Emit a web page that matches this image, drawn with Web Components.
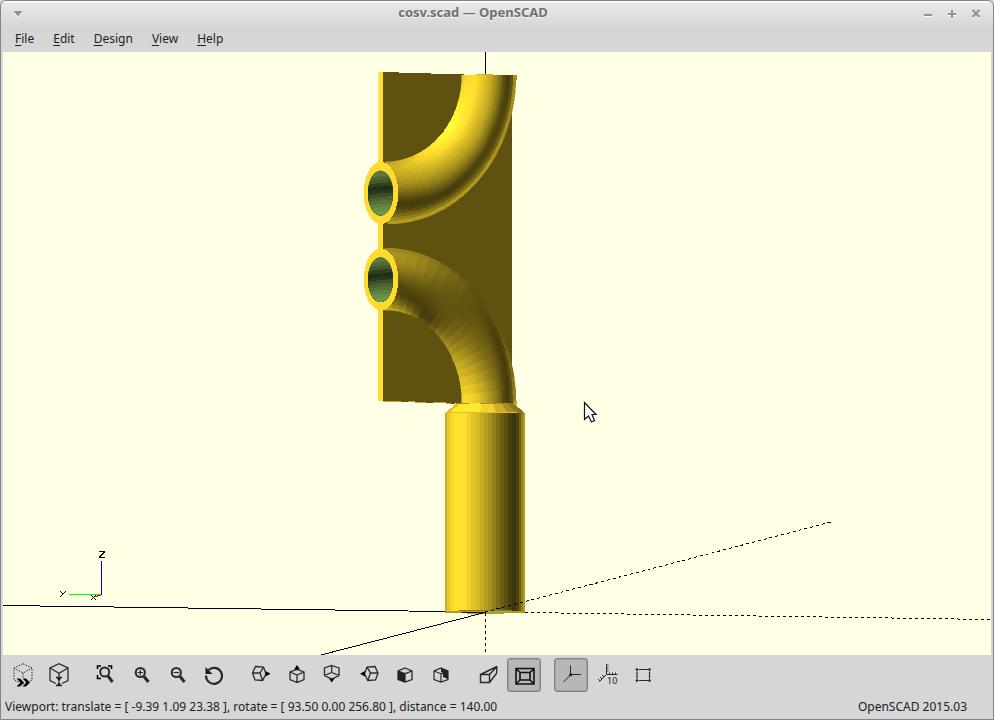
<!DOCTYPE html>
<html lang="en">
<head>
<meta charset="utf-8">
<title>cosv.scad — OpenSCAD</title>
<style>
html, body { height: 100%; margin: 0; background: #d6d6d6; }
body { font: 12px/18px "Noto Sans", sans-serif; color: #222; overflow: hidden; }
</style>
</head>
<body>
<scad-window>
  <title-bar slot="title">cosv.scad — OpenSCAD</title-bar>
  <menu-bar slot="menu"></menu-bar>
  <model-view slot="view"></model-view>
  <tool-bar slot="tools"></tool-bar>
  <status-bar slot="status">
    <span>Viewport: translate = [ -9.39 1.09 23.38 ], rotate = [ 93.50 0.00 256.80 ], distance = 140.00</span>
    <span slot="version">OpenSCAD 2015.03</span>
  </status-bar>
</scad-window>
<script>
class Base extends HTMLElement {
  constructor() {
    super();
    this.attachShadow({ mode: 'open' }).innerHTML = this.template();
  }
}

customElements.define('scad-window', class extends Base {
  template() {
    return `<style>
      :host { display: flex; flex-direction: column; box-sizing: border-box; height: 100vh; padding: 0 2px 1px;
        border: 1px solid #858585; border-radius: 6px 6px 0 0;
        background: linear-gradient(#fff 0 1px, #e9e9e9 2px, #d6d6d6 26px); }
      ::slotted(model-view) { flex: 1; min-height: 0; }
    </style>
    <slot name="title"></slot><slot name="menu"></slot><slot name="view"></slot><slot name="tools"></slot><slot name="status"></slot>`;
  }
});

customElements.define('title-bar', class extends Base {
  template() {
    return `<style>
      :host { display: flex; align-items: center; height: 24px; color: #707070; }
      h1 { flex: 1; margin: 0; text-align: center; font-size: 13px; line-height: 18px; height: 20px; font-weight: bold; text-shadow: 0 1px #f6f6f6; }
      button { display: block; border: 0; background: none; padding: 0; width: 24px; height: 24px; color: #929292; }
      svg { display: block; margin: auto; filter: drop-shadow(0 1px #fff); }
      .left { padding-left: 3px; }
      .right { display: flex; padding-right: 3px; }
    </style>
    <div class="left"><button aria-label="Window menu"><svg width="12" height="12"><path d="M1.500 4h9L6 9.500z" fill="currentColor"/></svg></button></div>
    <h1><slot></slot></h1>
    <div class="right">
      <button aria-label="Minimize"><svg width="12" height="12"><path d="M2 8h8" stroke="currentColor" stroke-width="2"/></svg></button>
      <button aria-label="Maximize"><svg width="12" height="12"><path d="M2 7h8M6 3v8" stroke="currentColor" stroke-width="2"/></svg></button>
      <button aria-label="Close"><svg width="12" height="12"><path d="M2.500 3l7 7M9.500 3l-7 7" stroke="currentColor" stroke-width="2.400"/></svg></button>
    </div>`;
  }
});

customElements.define('menu-bar', class extends Base {
  template() {
    const items = ['File', 'Edit', 'Design', 'View', 'Help'];
    return `<style>
      :host { display: block; }
      nav { display: flex; gap: 19px; height: 27px; padding-left: 12px; align-items: center; }
      button { font: inherit; color: inherit; border: 0; padding: 0; background: none; }
      u { text-underline-offset: 2px; text-decoration-thickness: 1px; }
    </style>
    <nav aria-label="Menu">${items.map(i => `<button><u>${i[0]}</u>${i.slice(1)}</button>`).join('')}</nav>`;
  }
});

/* Brightness profiles: each row is [angle, values at the V positions]. */
const V = [0, .1, .25, .4, .55, .7, .8, .9, 1];
const UPPER = [
  [0,  .70, .80, .74, .60, .38, .25, .40, .58, .76],
  [15, .85, .90, .80, .68, .48, .27, .30, .52, .78],
  [30, 1.04, 1.02, .90, .76, .60, .38, .24, .44, .80],
  [55, 1.19, 1.19, 1.04, .88, .74, .50, .28, .38, .80],
  [72, 1.08, 1.12, 1.05, .90, .78, .52, .30, .34, .76],
  [90, .92, 1.00, 1.03, .93, .78, .55, .33, .26, .76]
];
const LOWER = [
  [0,  .85, .70, .42, .28, .42, .60, .68, .72, .62],
  [15, .70, .48, .28, .34, .46, .58, .62, .64, .60],
  [30, .34, .24, .30, .36, .40, .44, .47, .50, .48],
  [45, .60, .48, .42, .40, .38, .38, .38, .38, .34],
  [65, .80, .76, .68, .58, .48, .42, .34, .26, .45],
  [90, 1.00, 1.04, .98, .86, .70, .50, .30, .28, .72]
];
const lerp = (a, b, f) => a + (b - a) * f;
function shade(table, t, v) {
  let i = 0, j = 0;
  while (i < table.length - 2 && table[i + 1][0] < t) i++;
  while (j < V.length - 2 && V[j + 1] < v) j++;
  const f = (t - table[i][0]) / (table[i + 1][0] - table[i][0]);
  const g = (v - V[j]) / (V[j + 1] - V[j]);
  return lerp(lerp(table[i][j + 1], table[i][j + 2], g), lerp(table[i + 1][j + 1], table[i + 1][j + 2], g), f);
}
const paint = k => `rgb(${[249, 215, 44].map(c => Math.min(255, Math.round(c * k))).join()})`;
/* Quarter bend between two elliptic edges, split into flat facets. */
function elbow(table, inner, outer, cy, dir, T) {
  const at = (t, v) => {
    const a = t * Math.PI / 180;
    const x = lerp(inner[0] + inner[1] * Math.sin(a), outer[0] + outer[1] * Math.sin(a), v);
    const y = cy + dir * lerp(inner[2], outer[2], v) * Math.cos(a);
    return x.toFixed(1) + ' ' + y.toFixed(1);
  };
  let s = '';
  const N = 20;
  for (let i = 0; i < T; i++) for (let j = 0; j < N; j++) {
    const a = i * 90 / T, b = (i + 1) * 90 / T, p = j / N, q = (j + 1) / N;
    const c = paint(shade(table, (a + b) / 2, (p + q) / 2));
    s += `<path d="M${at(a, p)}L${at(b, p)}L${at(b, q)}L${at(a, q)}z" fill="${c}" stroke="${c}" stroke-width=".5"/>`;
  }
  return s;
}
function bands(x, y, h, list) {
  return list.map(([w, k]) => { const r = `<rect x="${x}" y="${y}" width="${w}" height="${h}" fill="${paint(k)}"/>`; x += w; return r; }).join('');
}
function mouth(cy) {
  let s = `<ellipse cx="381" cy="${cy}" rx="17.300" ry="31" fill="#ffdb2f"/>`;
  const tones = ['#54723a', '#5a7a3e', '#4d6834', '#42592c', '#2f401f', '#222e15', '#2a381a', '#3c5026', '#496331', '#54723a', '#5f8240', '#678f44', '#6c9a48'];
  const id = 'm' + Math.round(cy);
  s += `<clipPath id="${id}"><ellipse cx="380.500" cy="${cy}" rx="12.500" ry="22.500"/></clipPath><g clip-path="url(#${id})">`;
  tones.forEach((c, i) => {
    const y = cy - 24 + i * 3.5;
    s += `<path d="M367 ${y + 2}L380 ${y}L394 ${y - 1}V${cy + 24}H367z" fill="${c}"/>`;
  });
  return s + '</g>';
}

customElements.define('model-view', class extends Base {
  template() {
    const body = bands(445, 412, 199, [[2, .82], [3, .93], [4, 1], [9, 1.04], [4, 1.03], [4, .97], [5, .9], [4, .86], [4, .79], [4, .74], [4, .67], [4, .59], [4, .51], [4, .43], [4, .37], [4, .29], [4, .24], [3, .3], [2, .45], [2, .6], [2, .72]]);
    return `<style>
      :host { display: block; background: #ffffe5; overflow: hidden; }
      svg { display: block; width: 100%; height: 100%; }
    </style>
    <svg viewBox="3 52 988 603" preserveAspectRatio="xMidYMid slice" role="img" aria-label="3D model" shape-rendering="crispEdges">
      <path d="M485.500 52V76" stroke="#000"/>
      <path d="M383 72L512 76V404H462L383 401z" fill="#5f5110"/>
      <path d="M379 72H383V401H378V160H379z" fill="#ffdb2f"/>
      <path d="M378.500 72V162" stroke="#ffdb2f" stroke-dasharray="1 1"/>
      <path d="M383 401L462 403.500" stroke="#c8a922" stroke-dasharray="18 7"/>
      ${elbow(UPPER, [385, 77, 87], [388, 128, 149], 75, 1, 25)}
      <path d="M476 75V74H493V75z" fill="#d2b225"/><path d="M513 75H517V80H516z" fill="#ab9021"/>
      ${elbow(LOWER, [385, 77, 93], [385, 131, 155], 403, -1, 18)}
      ${mouth(193)}${mouth(279.5)}
      ${body}
      <path d="M445 411H525V413L514 403H456L445 413z" fill="#ffffe5"/>
      <path d="M445 413L457 403H513L525 413z" fill="#e0bd29"/>
      <path d="M450 412L461 403H487L483 412z" fill="#ffe92f"/>
      <path d="M480 412L482 403H494L497 412z" fill="#f3d02b"/>
      <path d="M496 412L493 403H502L508 412z" fill="#d0ae25"/>
      <path d="M507 412L501 403H507L516 412z" fill="#a88c1f"/>
      <path d="M515 412L507 403H513L525 413H519z" fill="#8e7819"/>
      <path d="M456 403.500H469M480 403.500H509" stroke="#a88c1f"/>
      <path d="M514 401H517V405H514z" fill="#c4a421"/>
      <path d="M445 611H525V613H504V614H467V613H445z" fill="#b4971f"/>
      <path d="M459 610H512V611H459z" fill="#967f19"/>
      <path d="M462 612H488" stroke="#171c0a" stroke-width="1"/><path d="M486 612H507" stroke="#91ad48" stroke-width="2"/>
      <path d="M3 605.500L445 611.500M321 655L485 612.500" fill="none" stroke="#000"/>
      <path d="M485.500 613V655M485 612L831 522M525 612.500L991 619.500" fill="none" stroke="#000" stroke-dasharray="3 3"/>
      <path d="M101.500 561V595" stroke="#0000df"/><path d="M69 594.500H101" stroke="#0f0"/><path d="M94 597L101 595" stroke="#f00"/>
      <path d="M99 551.500H105M99 557.500H105M104.500 552L99.500 557M60 591l3 3M66 591l-6 6M91 595l5 5M96 595l-5 5" fill="none" stroke="#000"/>
      <path shape-rendering="auto" d="M584.500 402.500V419.500L588.500 416L591.500 422L594.500 420.500L592 414.500H596z" fill="#fff" stroke="#111" stroke-width="1.200"/>
    </svg>`;
  }
});

const S = 'fill="none" stroke="#2a2a2a"';
const F = 'fill="#1c1c1c"';
const lens = extra => `<circle cx="10.300" cy="9.500" r="4.600" ${S} stroke-width="2"/><path d="M14 13.500l4.500 5.500" ${S} stroke-width="3"/><path d="${extra}" ${S} stroke-width="1.200"/>`;
const ICONS = {
  preview: `<path d="M12 .700L21 5V17L12 21L3 17V5zM3 5L12 10L21 5M12 10V15" ${S} stroke-dasharray="1.500 1.300"/><path d="M5.500 15.500h3.500l4 4-4 4H5.500l4-4zM11.500 15.500H15l4 4-4 4h-3.500l4-4z" fill="#000"/>`,
  render: `<path d="M9 20.500L3 17.500V5L12 .700L21 5V17.500L15 20.500M3 5L12 10.300L21 5M12 10V15" ${S} stroke-width="1.300"/><path d="M9 14.500h6M9 22.500h6" ${S} stroke-width="1.300"/><path d="M10 15h4L12.500 18v1.500l1.500 3h-4L11.500 19.500V18z" ${F}/>`,
  all: `<path d="M3.500 6V3H7M14 3h3.500V6M3.500 12v3.500H7" fill="none" stroke="#000" stroke-width="1.600"/><circle cx="10.700" cy="9" r="4.500" ${S} stroke-width="2"/><path d="M14 13l4.500 6" ${S} stroke-width="3"/>`,
  zin: lens('M7.500 9.500H13M10.300 6.700V12.300'),
  zout: lens('M7.500 9.500H13'),
  reset: `<path d="M6.500 7A8 8 0 1 1 4 12.500" ${S} stroke-width="2.200"/><path d="M3.500 4v7h7z" ${F}/>`,
  right: `<path d="M6.500 3.500L14.500 4L17 10.700L13.700 17.500L6 17L3.500 10zM3.500 10L11 10L14.500 4M11 10L13.700 17.500" ${S} stroke-width="1.300"/><path d="M16.500 8l5 2.700-5 2.700z" fill="#000"/>`,
  top: `<path d="M12 6.500L19 9V16.500L12 19.500L5 16.500V9zM5 9L12 12L19 9M12 12V19.500" ${S} stroke-width="1.300"/><path d="M9 6.500L12 2l3 4.500z" fill="#000"/>`,
  bottom: `<path d="M10.700 2.500L18 5V12.500L10.700 16L3.500 12.500V5zM3.500 12.500L10.700 9.500L18 12.500M10.700 9.500V2.500" ${S} stroke-width="1.300"/><path d="M8 15.500h5.500L10.700 19.500z" fill="#000"/>`,
  left: `<path d="M18 3.500L10 4L7.500 10.700L10.800 17.500L18.500 17L21 10zM21 10L13.500 10L10 4M13.500 10L10.800 17.500" ${S} stroke-width="1.300"/><path d="M8 8l-5 2.700 5 2.700z" fill="#000"/>`,
  front: `<path d="M12 5L19 8V16.500L12 19L5 16.500V8zM5 8L12 10.700L19 8M12 10.700V19" ${S} stroke-width="1.300"/><path d="M5 8l7 2.700V19l-7-2.500z" fill="#222"/>`,
  back: `<path d="M12 5L19 8V16.500L12 19L5 16.500V8zM5 8L12 10.700M12 10.700V19M12 11L19 8" ${S} stroke-width="1.200"/><path d="M12 5l7 3v8l-5-2V10l-2-1z" fill="#222"/>`,
  persp: `<path d="M4.500 11.500H13.500V19.500H4.500zM4.500 11.500L21 3.500L13.500 11.500M13.500 19.500L20.500 10.500L21 3.500" ${S} stroke-width="1.400"/>`,
  ortho: `<path d="M4 5.500H22V21H4zM8 9.500H18V17H8zM4 5.500L8 9.500M22 5.500L18 9.500M4 21L8 17M22 21L18 17" fill="none" stroke="#111" stroke-width="1.600"/>`,
  axes: `<path d="M11.500 2.500V12L4.500 19M11.500 11.500H22" ${S}/><circle cx="11.700" cy="11.700" r="1.500" ${F}/>`,
  scale: `<path d="M11.500 1.500V11.500H22.500M11.500 2h2M11.500 5h2M11.500 8h2M14.500 11.500v-2M17.500 11.500v-2M20.500 11.500v-2M11.500 11.500L4.500 18.500M9 14l-2-2M7 16l-2-2M5 18l-2-2" ${S}/><text x="12" y="21" font-size="9" fill="#222">10</text>`,
  edges: `<path d="M8 6.500H17M8 17.500H17M6 8.500V15.500M18.500 8.500V15.500" ${S} stroke-width="1.200"/><g ${F}><circle cx="6" cy="6.500" r="1.300"/><circle cx="18.500" cy="6.500" r="1.300"/><circle cx="6" cy="17.500" r="1.300"/><circle cx="18.500" cy="17.500" r="1.300"/></g>`
};

customElements.define('tool-button', class extends Base {
  template() {
    const on = this.hasAttribute('checked');
    return `<style>
      :host { display: block; }
      button { display: grid; place-items: center; box-sizing: border-box; width: 34px; height: 34px; padding: 0; border: 1px solid transparent; border-radius: 3px; background: none; font: inherit; }
      button[aria-pressed=true] { border-color: #808080; background: #b7b7b7; box-shadow: inset 0 0 0 1px #a0a0a0; }
      svg { display: block; overflow: visible; }
    </style>
    <button aria-label="${this.getAttribute('label')}" aria-pressed="${on}"><svg width="24" height="24" viewBox="0 0 24 24">${ICONS[this.getAttribute('icon')]}</svg></button>`;
  }
});

customElements.define('tool-bar', class extends Base {
  template() {
    const groups = [
      [['preview', 'Preview'], ['render', 'Render']],
      [['all', 'View all'], ['zin', 'Zoom in'], ['zout', 'Zoom out'], ['reset', 'Reset view']],
      [['right', 'Right'], ['top', 'Top'], ['bottom', 'Bottom'], ['left', 'Left'], ['front', 'Front'], ['back', 'Back']],
      [['persp', 'Perspective'], ['ortho', 'Orthogonal', 1]],
      [['axes', 'Show axes', 1], ['scale', 'Show scale markers'], ['edges', 'Show edges']]
    ];
    return `<style>
      :host { display: flex; gap: 13px; padding: 3px; }
      div { display: flex; gap: 2px; }
    </style>${groups.map(g => `<div role="group">${g.map(([i, l, c]) => `<tool-button icon="${i}" label="${l}"${c ? ' checked' : ''}></tool-button>`).join('')}</div>`).join('')}`;
  }
});

customElements.define('status-bar', class extends Base {
  template() {
    return `<style>
      :host { display: flex; justify-content: space-between; align-items: center; height: 23px; padding: 0 24px 0 2px; white-space: nowrap; }
    </style><div><slot></slot></div><slot name="version"></slot>`;
  }
});
</script>
</body>
</html>
